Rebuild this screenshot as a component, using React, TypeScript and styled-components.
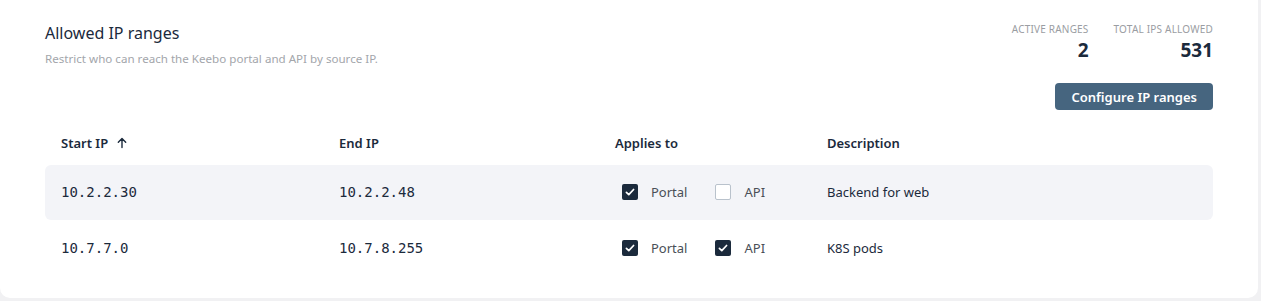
import React from 'react';
import styled, { createGlobalStyle } from 'styled-components';

const GlobalStyle = createGlobalStyle`
  html, body {
    margin: 0;
    padding: 0;
    background: #f1f1f3;
  }
  body {
    font-family: 'Noto Sans', 'Open Sans', sans-serif;
    color: #1b2a3c;
  }
`;

type Range = {
  start: string;
  end: string;
  portal: boolean;
  api: boolean;
  description: string;
};

const ranges: Range[] = [
  { start: '10.2.2.30', end: '10.2.2.48', portal: true, api: false, description: 'Backend for web' },
  { start: '10.7.7.0', end: '10.7.8.255', portal: true, api: true, description: 'K8S pods' },
];

const App: React.FC = () => {
  return (
    <>
      <GlobalStyle />
      <Card>
        <Header>
          <TitleBlock>
            <Title>Allowed IP ranges</Title>
            <Subtitle>Restrict who can reach the Keebo portal and API by source IP.</Subtitle>
          </TitleBlock>
          <Aside>
            <Stats>
              <Stat>
                <StatLabel>Active ranges</StatLabel>
                <StatValue>2</StatValue>
              </Stat>
              <Stat>
                <StatLabel>Total IPs allowed</StatLabel>
                <StatValue>531</StatValue>
              </Stat>
            </Stats>
            <Button>Configure IP ranges</Button>
          </Aside>
        </Header>

        <Table>
          <HeadRow>
            <HeadCell>
              Start IP
              <svg width="12" height="12" viewBox="0 0 12 12" fill="none" stroke="#1b2a3c" strokeWidth="1.4" strokeLinecap="round" strokeLinejoin="round">
                <path d="M6 10.5V1.8M2.3 5.3 6 1.6l3.7 3.7" />
              </svg>
            </HeadCell>
            <HeadCell>End IP</HeadCell>
            <HeadCell>Applies to</HeadCell>
            <HeadCell>Description</HeadCell>
          </HeadRow>
          {ranges.map((r, i) => (
            <Row key={r.start} $shaded={i % 2 === 0}>
              <Mono>{r.start}</Mono>
              <Mono>{r.end}</Mono>
              <Applies>
                <Check>
                  <Box $on={r.portal}>{r.portal && <Tick />}</Box>
                  Portal
                </Check>
                <Check>
                  <Box $on={r.api}>{r.api && <Tick />}</Box>
                  API
                </Check>
              </Applies>
              <Text>{r.description}</Text>
            </Row>
          ))}
        </Table>
      </Card>
    </>
  );
};

const Tick: React.FC = () => (
  <svg width="12" height="12" viewBox="0 0 12 12" fill="none" stroke="#fff" strokeWidth="1.7" strokeLinecap="round" strokeLinejoin="round">
    <path d="M2.4 6.3l2.4 2.4 4.8-5.2" />
  </svg>
);

const Card = styled.div`
  width: 1258px;
  height: 298px;
  box-sizing: border-box;
  background: #fff;
  border-radius: 0 0 10px 10px;
  padding: 0 45px;
`;

const Header = styled.div`
  display: flex;
  justify-content: space-between;
  align-items: flex-start;
  padding-top: 22px;
  height: 142px;
  box-sizing: border-box;
`;

const TitleBlock = styled.div`
  display: flex;
  flex-direction: column;
`;

const Title = styled.h2`
  margin: 0;
  font-size: 16px;
  font-weight: 400;
  line-height: 22px;
  color: #1b2a3c;
`;

const Subtitle = styled.p`
  margin: 7px 0 0;
  font-size: 11.6px;
  line-height: 15px;
  color: #a3a6ab;
`;

const Aside = styled.div`
  display: flex;
  flex-direction: column;
  align-items: flex-end;
`;

const Stats = styled.div`
  display: flex;
  gap: 25px;
`;

const Stat = styled.div`
  display: flex;
  flex-direction: column;
  align-items: flex-end;
`;

const StatLabel = styled.span`
  font-size: 10px;
  line-height: 14px;
  text-transform: uppercase;
  letter-spacing: 0.2px;
  color: #9a9da2;
`;

const StatValue = styled.span`
  margin-top: 3px;
  font-size: 19px;
  line-height: 22px;
  font-weight: 700;
  color: #1b2a3c;
`;

const Button = styled.button`
  margin-top: 22px;
  height: 27px;
  padding: 0 16px;
  border: none;
  border-radius: 4px;
  background: #46657f;
  color: #fff;
  font-family: 'Noto Sans', sans-serif;
  font-size: 13px;
  font-weight: 600;
`;

const Table = styled.div`
  display: flex;
  flex-direction: column;
`;

const grid = `
  display: grid;
  grid-template-columns: 278px 276px 212px 1fr;
  align-items: center;
  padding: 0 16px;
`;

const HeadRow = styled.div`
  ${grid};
  height: 22px;
  margin-top: -10px;
  margin-bottom: 10px;
`;

const HeadCell = styled.div`
  display: flex;
  align-items: center;
  gap: 8px;
  font-size: 13px;
  font-weight: 600;
  color: #1b2a3c;
`;

const Row = styled.div<{ $shaded: boolean }>`
  ${grid};
  height: 55px;
  margin-top: 1px;
  border-radius: 6px;
  background: ${(p) => (p.$shaded ? '#f3f4f8' : 'transparent')};
`;

const Mono = styled.span`
  font-family: 'DejaVu Sans Mono', monospace;
  font-size: 14px;
  line-height: 18px;
  margin-top: -2px;
  color: #1b2a3c;
`;

const Text = styled.span`
  font-size: 13px;
  line-height: 18px;
  margin-top: -2px;
  color: #1b2a3c;
`;

const Applies = styled.div`
  display: flex;
  align-items: center;
  gap: 28px;
  padding-left: 7px;
  margin-top: -1px;
`;

const Check = styled.label`
  display: flex;
  align-items: center;
  gap: 13px;
  font-size: 13px;
  color: #4a4f57;
`;

const Box = styled.span<{ $on: boolean }>`
  width: 16px;
  height: 16px;
  box-sizing: border-box;
  border-radius: 2px;
  display: flex;
  align-items: center;
  justify-content: center;
  background: ${(p) => (p.$on ? '#1b2a3c' : '#fff')};
  border: ${(p) => (p.$on ? 'none' : '1.5px solid #b9c2cc')};
`;

export default App;
